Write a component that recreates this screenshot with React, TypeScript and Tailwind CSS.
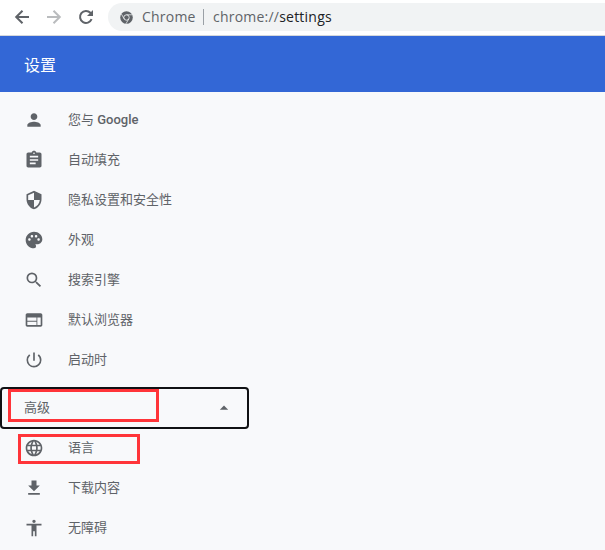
import React from "react";
import type { IconType } from "react-icons";
import {
  MdAccessibility,
  MdArrowDropUp,
  MdAssignment,
  MdFileDownload,
  MdLanguage,
  MdPalette,
  MdPerson,
  MdPowerSettingsNew,
  MdSearch,
  MdSecurity,
  MdWeb,
} from "react-icons/md";

type Item = {
  icon: IconType;
  label: string;
  latin?: string;
  marked?: boolean;
};

const basicItems: Item[] = [
  { icon: MdPerson, label: "您与", latin: "Google" },
  { icon: MdAssignment, label: "自动填充" },
  { icon: MdSecurity, label: "隐私设置和安全性" },
  { icon: MdPalette, label: "外观" },
  { icon: MdSearch, label: "搜索引擎" },
  { icon: MdWeb, label: "默认浏览器" },
  { icon: MdPowerSettingsNew, label: "启动时" },
];

const advancedItems: Item[] = [
  { icon: MdLanguage, label: "语言", marked: true },
  { icon: MdFileDownload, label: "下载内容" },
  { icon: MdAccessibility, label: "无障碍" },
];

const NavIcon = ({ d, className = "" }: { d: string; className?: string }) => (
  <svg
    viewBox="0 0 20 20"
    fill="none"
    stroke="currentColor"
    strokeWidth="2"
    className={`h-5 w-5 ${className}`}
  >
    <path d={d} />
  </svg>
);

const ChromeIcon = () => (
  <svg viewBox="0 0 24 24" className="ml-3 h-[13px] w-[13px] shrink-0">
    <circle cx="12" cy="12" r="11.6" fill="#5f6368" />
    <circle cx="12" cy="12" r="5" fill="none" stroke="#f1f3f4" strokeWidth="1.6" />
    <path
      d="M12 7h10.5M7.7 14.5 2.4 5.3M16.3 14.5 11 23.6"
      fill="none"
      stroke="#f1f3f4"
      strokeWidth="1.4"
    />
  </svg>
);

const Toolbar = () => (
  <div className="flex h-9 items-start border-b border-[#d5d8dc] bg-white pt-[3px] text-[#5f6368]">
    <div className="flex h-7 w-[108px] shrink-0 items-center gap-3 pl-3">
      <NavIcon d="M17 10H4.5M10.5 3.7 4.2 10l6.3 6.3" />
      <NavIcon d="M3 10h12.5M9.5 3.7l6.3 6.3-6.3 6.3" className="text-[#babcbe]" />
      <svg viewBox="0 0 20 20" className="h-5 w-5">
        <path
          d="M15.6 12.2A6 6 0 1 1 14.4 5.8L16 7.4"
          fill="none"
          stroke="currentColor"
          strokeWidth="2"
        />
        <path d="M17 3v6h-6z" fill="currentColor" />
      </svg>
    </div>
    <div className="flex h-7 flex-1 items-center rounded-l-full bg-[#f1f3f4] font-['Open_Sans','Noto_Sans',sans-serif] text-sm tracking-[0.22px]">
      <ChromeIcon />
      <span className="ml-[9px] w-[61px]">Chrome</span>
      <span className="h-4 w-px bg-[#9aa0a6]" />
      <span className="ml-[9px]">
        chrome://<span className="text-[#202124]">settings</span>
      </span>
    </div>
  </div>
);

const MenuItem = ({ icon: Icon, label, latin, marked }: Item) => (
  <li className="relative flex h-10 items-center pl-6">
    <Icon className="h-5 w-5 shrink-0" />
    <span className="ml-6 pb-px">
      {label}
      {latin && <span className="font-medium"> {latin}</span>}
    </span>
    {marked && (
      <span className="absolute left-[18px] top-1.5 h-[30px] w-[122px] border-3 border-[#ff3439]" />
    )}
  </li>
);

const App = () => {
  return (
    <div className="h-[550px] w-full overflow-hidden bg-[#f8f9fb] font-['Roboto','Noto_Sans_CJK_SC',sans-serif]">
      <Toolbar />
      <header className="flex h-14 items-center bg-[#3367d6] pl-6 pt-1 text-base text-white">
        设置
      </header>
      <nav className="pt-2 text-[13px] text-[#5f6368]">
        <ul>
          {basicItems.map((item) => (
            <MenuItem key={item.label} {...item} />
          ))}
        </ul>
        <button className="relative mt-[7px] flex h-[42px] w-[249px] items-center justify-between rounded border-2 border-[#101114] pl-[22px] pr-[13px]">
          <span className="pb-px">高级</span>
          <MdArrowDropUp className="h-5 w-5" />
          <span className="absolute left-[6px] top-0 h-[33px] w-[151px] border-3 border-[#ff3439]" />
        </button>
        <ul className="-mt-px">
          {advancedItems.map((item) => (
            <MenuItem key={item.label} {...item} />
          ))}
        </ul>
      </nav>
    </div>
  );
};

export default App;
